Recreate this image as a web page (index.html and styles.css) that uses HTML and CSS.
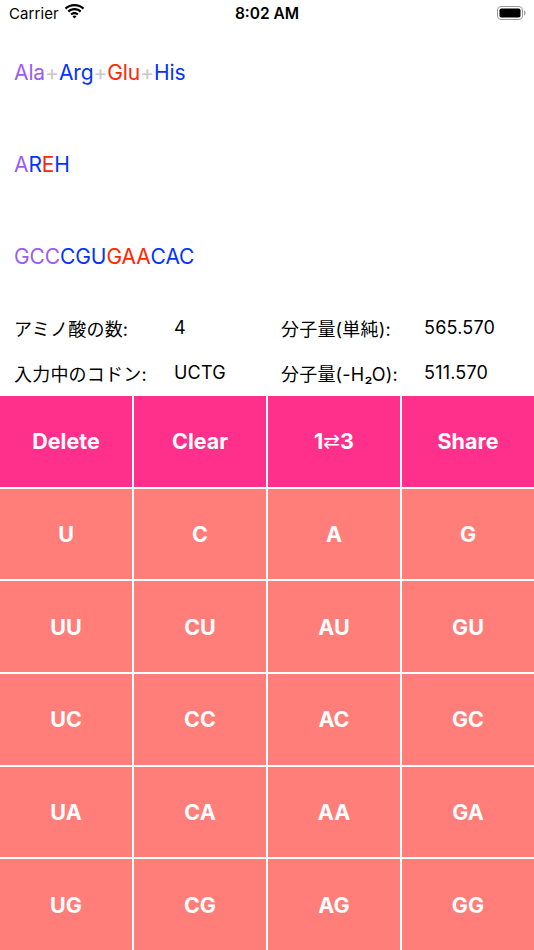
FILE: index.html
```html
<!DOCTYPE html>
<html lang="ja">
<head>
<meta charset="utf-8">
<link rel="stylesheet" href="styles.css">
</head>
<body>
<div class="page">
  <div class="status">
    <div class="status-left">
      <span class="carrier">Carrier</span>
      <svg class="wifi" width="21" height="15" viewBox="0 0 20 15">
        <path d="M10 2.2c3.2 0 6.1 1.2 8.3 3.2l1.5-1.6C17.2 1.4 13.8 0 10 0S2.8 1.4 0.2 3.8l1.5 1.6C3.9 3.4 6.8 2.2 10 2.2z" fill="#000"/>
        <path d="M10 6.3c2.1 0 4 .8 5.4 2.1l1.5-1.6C15.1 5.1 12.7 4.1 10 4.1S4.9 5.1 3.1 6.8l1.5 1.6C6 7.1 7.9 6.3 10 6.3z" fill="#000"/>
        <path d="M10 10.3c1 0 1.9.4 2.6 1l1.5-1.6C13 8.7 11.6 8.1 10 8.1S7 8.7 5.9 9.7l1.5 1.6c.7-.6 1.6-1 2.6-1z" fill="#000"/>
        <path d="M10 14.6l2-2.2c-.5-.5-1.2-.8-2-.8s-1.5.3-2 .8z" fill="#000"/>
      </svg>
    </div>
    <div class="time">8:02 AM</div>
    <div class="status-right">
      <svg width="30" height="14" viewBox="0 0 30 14">
        <rect x="0.5" y="0.5" width="25" height="13" rx="3.5" fill="none" stroke="#9a9a9a" stroke-width="1"/>
        <rect x="2.5" y="2.5" width="21" height="9" rx="1.8" fill="#000"/>
        <path d="M27 4.5c1 .3 1.5 1.2 1.5 2.5s-.5 2.2-1.5 2.5z" fill="#9a9a9a"/>
      </svg>
    </div>
  </div>

  <div class="seq-line"><span class="pu">Ala</span><span class="plus">+</span><span class="bl">Arg</span><span class="plus">+</span><span class="rd">Glu</span><span class="plus">+</span><span class="bl">His</span></div>
  <div class="seq-line"><span class="pu">A</span><span class="bl">R</span><span class="rd">E</span><span class="bl">H</span></div>
  <div class="seq-line"><span class="pu">GCC</span><span class="bl">CGU</span><span class="rd">GAA</span><span class="bl">CAC</span></div>

  <div class="info">
    <div class="info-row">
      <span>アミノ酸の数:</span><span>4</span><span>分子量(単純):</span><span>565.570</span>
    </div>
    <div class="info-row">
      <span>入力中のコドン:</span><span>UCTG</span><span>分子量(-H₂O):</span><span>511.570</span>
    </div>
  </div>

  <div class="pad">
    <div class="key action">Delete</div>
    <div class="key action">Clear</div>
    <div class="key action">1<span class="arrows">⇄</span>3</div>
    <div class="key action">Share</div>
    <div class="key">U</div><div class="key">C</div><div class="key">A</div><div class="key">G</div>
    <div class="key">UU</div><div class="key">CU</div><div class="key">AU</div><div class="key">GU</div>
    <div class="key">UC</div><div class="key">CC</div><div class="key">AC</div><div class="key">GC</div>
    <div class="key">UA</div><div class="key">CA</div><div class="key">AA</div><div class="key">GA</div>
    <div class="key">UG</div><div class="key">CG</div><div class="key">AG</div><div class="key">GG</div>
  </div>
</div>
</body>
</html>
```

FILE: styles.css
```css
html, body {
  margin: 0;
  padding: 0;
  background: #fff;
}
body {
  font-family: Inter, "Noto Sans CJK JP", sans-serif;
  color: #000;
}
.page {
  width: 534px;
  height: 950px;
  display: flex;
  flex-direction: column;
  overflow: hidden;
}
.status {
  height: 26px;
  display: flex;
  align-items: center;
  justify-content: space-between;
  padding: 0 7px 0 9px;
  position: relative;
  font-size: 15px;
}
.status-left {
  display: flex;
  align-items: center;
  gap: 5px;
}
.carrier {
  letter-spacing: 0.1px;
}
.wifi {
  margin-top: -3px;
}
.time {
  position: absolute;
  left: 0;
  right: 0;
  text-align: center;
  font-weight: 600;
  font-size: 15.5px;
  pointer-events: none;
}
.status-right {
  display: flex;
  align-items: center;
  margin-top: -1px;
}
.seq-line {
  height: 92px;
  display: flex;
  align-items: center;
  padding-left: 14px;
  font-size: 21px;
  letter-spacing: -0.1px;
}
.pu { color: #9b5cf6; }
.bl { color: #0433ff; }
.rd { color: #ff2600; }
.plus { color: #c8c8c8; }
.info {
  padding-top: 3px;
}
.info-row {
  height: 45px;
  display: grid;
  grid-template-columns: 160px 107px 143px auto;
  align-items: center;
  padding-left: 14px;
  font-size: 18px;
  letter-spacing: 0.2px;
}
.pad {
  margin-top: auto;
  height: 554px;
  display: grid;
  grid-template-columns: repeat(4, 1fr);
  grid-template-rows: repeat(6, 1fr);
  gap: 2px;
  background: #fff;
}
.key {
  background: #ff7e79;
  color: #fff;
  font-weight: 700;
  font-size: 21.5px;
  display: flex;
  align-items: center;
  justify-content: center;
}
.key.action {
  background: #ff2f8c;
}
.arrows {
  font-family: "DejaVu Sans", sans-serif;
  font-weight: 400;
  font-size: 20px;
}
```
